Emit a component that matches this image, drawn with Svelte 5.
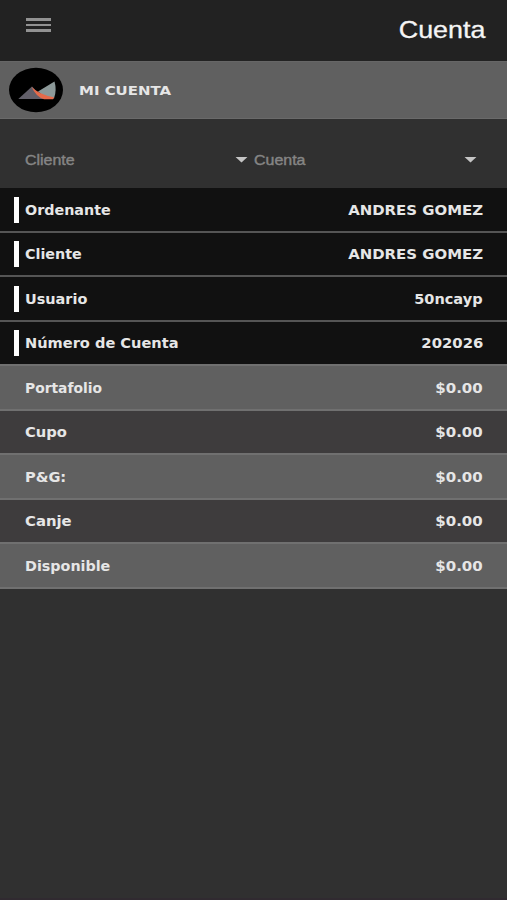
<script>
  const rows = [
    { label: 'Ordenante', value: 'ANDRES GOMEZ', kind: 'info', stretch: [1.06, 1.105] },
    { label: 'Cliente', value: 'ANDRES GOMEZ', kind: 'info', stretch: [1.06, 1.105] },
    { label: 'Usuario', value: '50ncayp', kind: 'info', stretch: [1.07, 1.075] },
    { label: 'Número de Cuenta', value: '202026', kind: 'info', stretch: [1.08, 1.1] },
    { label: 'Portafolio', value: '$0.00', kind: 'light', stretch: [1.025, 1.11] },
    { label: 'Cupo', value: '$0.00', kind: 'dark', stretch: [1.09, 1.11] },
    { label: 'P&G:', value: '$0.00', kind: 'light', stretch: [1.08, 1.11] },
    { label: 'Canje', value: '$0.00', kind: 'dark', stretch: [1.1, 1.11] },
    { label: 'Disponible', value: '$0.00', kind: 'light', stretch: [1.06, 1.11] }
  ];
</script>

<main>
  <header>
    <button class="menu" aria-label="Menu"><i></i><i></i><i></i></button>
    <h1>Cuenta</h1>
  </header>

  <section class="account">
    <svg width="56" height="46" viewBox="0 0 56 46">
      <ellipse cx="28" cy="23" rx="27" ry="22.3" fill="#000" />
      <path d="M30 24.5 46.5 14.5Q49 23 46 31.5Q37 31 30 24.5Z" fill="#8b9898" />
      <path d="M10.3 32 24 19.5 36 32Z" fill="#625f69" />
      <path d="M23.5 19.8Q31 28 46 30.2L45 32.2H36Q28 30 23.5 19.8Z" fill="#e56a4a" />
    </svg>
    <span>MI CUENTA</span>
  </section>

  <section class="filters">
    <div class="select first"><span>Cliente</span><b></b></div>
    <div class="select second"><span>Cuenta</span><b></b></div>
  </section>

  <dl>
    {#each rows as row}
      <div class="row {row.kind}">
        <dt><span style:transform="scaleX({row.stretch[0]})">{row.label}</span></dt>
        <dd style:transform="scaleX({row.stretch[1]})">{row.value}</dd>
      </div>
    {/each}
  </dl>
</main>

<style>
  main {
    box-sizing: border-box;
    height: 900px;
    background: #303030;
    border-bottom: 2px solid #302a30;
    color: #e6e6e6;
    font: bold 13.5px "DejaVu Sans", Verdana, sans-serif;
    overflow: hidden;
  }
  header {
    box-sizing: border-box;
    height: 61px;
    display: flex;
    justify-content: space-between;
    align-items: flex-start;
    padding: 0 22px 0 26px;
    background: #222;
  }
  .menu {
    display: flex;
    flex-direction: column;
    gap: 3px;
    margin: 18px 0 0;
    padding: 0;
    border: 0;
    background: none;
  }
  .menu i {
    width: 25px;
    height: 2.6px;
    background: #929292;
  }
  h1 {
    margin: 15px 0 0;
    font: 24px/30px "Liberation Sans", Arial, sans-serif;
    color: #f5f5f5;
    -webkit-text-stroke: 0.3px #f5f5f5;
    transform: scaleX(1.12);
    transform-origin: right;
  }
  .account {
    box-sizing: border-box;
    height: 58px;
    display: flex;
    align-items: center;
    gap: 15px;
    padding-left: 8px;
    background: #606060;
    border-top: 1px solid #666;
    border-bottom: 1px solid #6a6a6a;
  }
  .account span {
    font-size: 13px;
    transform: scaleX(1.15);
    transform-origin: left;
  }
  .filters {
    height: 69px;
    display: flex;
    align-items: center;
    padding: 0 30px 0 25px;
    box-sizing: border-box;
    font: 14px "Liberation Sans", Arial, sans-serif;
    color: #858585;
    -webkit-text-stroke: 0.4px #858585;
  }
  .select {
    display: flex;
    align-items: center;
    justify-content: space-between;
    padding-top: 12px;
  }
  .select span {
    transform: scaleX(1.14);
    transform-origin: left;
  }
  .first { width: 223px; }
  .second { flex: 1; margin-left: 6px; }
  .select b {
    width: 13px;
    height: 6px;
    background: #c5c5c5;
    clip-path: polygon(0 0, 100% 0, 50% 100%);
  }
  dl { margin: 0; }
  .row {
    box-sizing: border-box;
    height: 44.5px;
    display: flex;
    align-items: center;
    padding: 0.5px 24px 0 25px;
    border-bottom: 2px solid #707070;
  }
  .info {
    padding-left: 14px;
    background: #111;
    border-bottom-color: #555;
  }
  .info:nth-child(4) { border-bottom-color: #707070; }
  .info::before {
    content: "";
    width: 5px;
    height: 26px;
    margin-right: 6px;
    background: #fff;
  }
  .light { background: #606060; }
  .dark { background: #3e3c3d; }
  dt { flex: 1; }
  dt span {
    display: inline-block;
    transform-origin: left;
  }
  dd {
    margin: 0;
    transform-origin: right;
  }
</style>
